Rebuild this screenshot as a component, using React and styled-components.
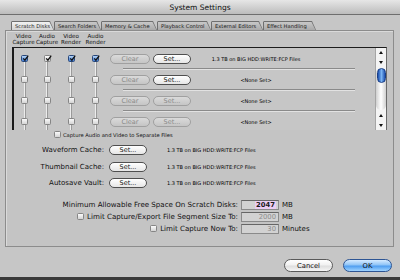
import React from "react"
import styled, {createGlobalStyle} from "styled-components"

const GlobalStyle = createGlobalStyle`
  html, body {
    margin: 0;
    padding: 0;
    background: #c4c4c4;
  }
  body {
    font-family: "DejaVu Sans", "Liberation Sans", sans-serif;
    color: #111;
  }
`

const tabs = [
  {label: "Scratch Disks", width: 43, active: true},
  {label: "Search Folders", width: 47},
  {label: "Memory & Cache", width: 56},
  {label: "Playback Control", width: 54},
  {label: "External Editors", width: 52},
  {label: "Effect Handling", width: 53},
]

const rows = [
  {checks: ["blue", "plain", "blue", "blue"], setOn: true, path: "1.3 TB on  BIG HDD:WRITE:FCP Files"},
  {checks: [null, null, null, null], setOn: true, path: "<None Set>"},
  {checks: [null, null, null, null], setOn: false, path: "<None Set>"},
  {checks: [null, null, null, null], setOn: false, path: "<None Set>"},
]

const caches = ["Waveform Cache:", "Thumbnail Cache:", "Autosave Vault:"]

function Check({tone}) {
  return (
    <Box $tone={tone}>
      {tone && (
        <svg width="7" height="7" viewBox="0 0 7 7">
          <path d="M1.2 3.4 L2.9 5.2 L6.2 0.6" fill="none" stroke="#111" strokeWidth="1.3" />
        </svg>
      )}
    </Box>
  )
}

export default function App () {
  return (
    <Window>
      <GlobalStyle />
      <TitleBar>System Settings</TitleBar>
      <Content>
        <TabBar>
          {tabs.map((t) => (
            <TabEdge key={t.label} $width={t.width}>
              <TabFace $active={t.active}>{t.label}</TabFace>
            </TabEdge>
          ))}
        </TabBar>

        <Panel>
          <HeaderRow>
            <span>Video<br />Capture</span>
            <span>Audio<br />Capture</span>
            <span>Video<br />Render</span>
            <span>Audio<br />Render</span>
          </HeaderRow>

          <ListBox>
            <Rows>
              {rows.map((r, i) => (
                <Row key={i}>
                  <Checks>
                    {r.checks.map((c, j) => (
                      <CheckCell key={j} $first={i === 0}>
                        <Check tone={c} />
                      </CheckCell>
                    ))}
                  </Checks>
                  <PillButton $width={40} $on={false} $gap={2}>Clear</PillButton>
                  <PillButton $width={38} $on={r.setOn} $gap={3}>Set...</PillButton>
                  <PathText>{r.path}</PathText>
                </Row>
              ))}
            </Rows>
            <ScrollBar>
              <Arrow><Tri $up /></Arrow>
              <Arrow><Tri /></Arrow>
              <Track><Thumb /></Track>
              <Arrow><Tri $up /></Arrow>
              <Arrow><Tri /></Arrow>
            </ScrollBar>
          </ListBox>

          <SeparateRow>
            <Check />
            <span>Capture Audio and Video to Separate Files</span>
          </SeparateRow>

          <CacheGrid>
            {caches.map((c) => (
              <React.Fragment key={c}>
                <CacheLabel>{c}</CacheLabel>
                <PillButton $width={38} $on={true} $gap={0}>Set...</PillButton>
                <CachePath>1.3 TB on  BIG HDD:WRITE:FCP Files</CachePath>
              </React.Fragment>
            ))}
          </CacheGrid>

          <LimitsGrid>
            <LimitLabel>Minimum Allowable Free Space On Scratch Disks:</LimitLabel>
            <Field $active><Highlight>2047</Highlight></Field>
            <Unit>MB</Unit>

            <LimitLabel><Check /><span>Limit Capture/Export File Segment Size To:</span></LimitLabel>
            <Field>2000</Field>
            <Unit>MB</Unit>

            <LimitLabel><Check /><span>Limit Capture Now To:</span></LimitLabel>
            <Field>30</Field>
            <Unit>Minutes</Unit>
          </LimitsGrid>
        </Panel>

        <Footer>
          <DialogButton>Cancel</DialogButton>
          <DialogButton $primary>OK</DialogButton>
        </Footer>
      </Content>
      <BottomStrip />
    </Window>
  )
}

const Window = styled.div`
  width: 400px;
  height: 280px;
  display: flex;
  flex-direction: column;
  background: #c6c6c6;
  overflow: hidden;
`

const TitleBar = styled.div`
  height: 14px;
  border-bottom: 1px solid #6e6e6e;
  background: linear-gradient(#e6e6e6, #bcbcbc);
  display: flex;
  align-items: center;
  justify-content: center;
  font-size: 7.5px;
  color: #111;
`

const Content = styled.div`
  flex: 1;
  display: flex;
  flex-direction: column;
  padding: 6px 6px 0 5px;
`

const TabBar = styled.div`
  height: 9px;
  display: flex;
  padding-left: 6px;
`

const TabEdge = styled.div`
  width: ${p => p.$width}px;
  height: 9px;
  padding: 1px 0 0 1px;
  box-sizing: border-box;
  background: #6f6f6f;
  clip-path: polygon(0 100%, 0 1px, 1px 0, calc(100% - 4px) 0, 100% 100%);
`

const TabFace = styled.div`
  height: 100%;
  padding-left: 3px;
  display: flex;
  align-items: center;
  font-size: 5.2px;
  color: #1a1a1a;
  background: ${p => p.$active ? "linear-gradient(#f2f2f2, #d2d2d2)" : "linear-gradient(#c8c8c8, #a9a9a9)"};
  clip-path: polygon(0 100%, 0 0, calc(100% - 4.5px) 0, calc(100% - 0.5px) 100%);
`

const Panel = styled.div`
  height: 217px;
  box-sizing: border-box;
  border: 1px solid #8c8c8c;
  box-shadow: inset 1px 1px 0 #dadada;
  background: #c4c4c4;
  padding: 0 6px 0 6px;
  display: flex;
  flex-direction: column;
`

const HeaderRow = styled.div`
  height: 16px;
  display: grid;
  grid-template-columns: 23px 24px 24px 25px;
  align-items: center;
  span {
    text-align: center;
    font-size: 5.6px;
    line-height: 6.5px;
    color: #111;
  }
`

const ListBox = styled.div`
  height: 83px;
  box-sizing: border-box;
  display: flex;
  border-top: 1px solid #1c1c1c;
  border-left: 2px solid #1c1c1c;
  border-right: 1px solid #6a6a6a;
  background: #c6c6c6;
  overflow: hidden;
`

const Rows = styled.div`
  flex: 1;
  display: flex;
  flex-direction: column;
`

const Row = styled.div`
  position: relative;
  height: 21px;
  flex: none;
  display: flex;
  align-items: center;

  &::after {
    content: "";
    position: absolute;
    left: 109px;
    width: 232px;
    bottom: 0;
    height: 1px;
    background: #8a8a8a;
    box-shadow: 0 1px 0 #e2e2e2;
  }
`

const Checks = styled.div`
  height: 100%;
  display: grid;
  grid-template-columns: 21px 24px 24px 25px;
`

const CheckCell = styled.div`
  position: relative;
  display: flex;
  align-items: center;
  justify-content: center;
  height: 100%;

  &::before {
    content: "";
    position: absolute;
    left: calc(50% - 1px);
    top: ${p => p.$first ? "50%" : "0"};
    bottom: 0;
    width: 1px;
    background: #ececec;
    box-shadow: 1px 0 0 #9a9a9a;
  }
`

const Box = styled.div`
  position: relative;
  width: 7px;
  height: 7px;
  flex: none;
  box-sizing: border-box;
  border-radius: 1.5px;
  display: flex;
  align-items: center;
  justify-content: center;
  border: 1px solid ${p => p.$tone === "blue" ? "#27477c" : "#858585"};
  background: ${p => p.$tone === "blue" ? "linear-gradient(#b7d6f8, #3d78cf)" : "linear-gradient(#fafafa, #d4d4d4)"};
  svg {
    position: absolute;
    left: 0;
    top: -1px;
  }
`

const PillButton = styled.div`
  width: ${p => p.$width}px;
  height: 10px;
  margin-left: ${p => p.$gap}px;
  box-sizing: border-box;
  border-radius: 5px;
  display: flex;
  align-items: center;
  justify-content: center;
  font-size: 6.5px;
  border: 1px solid ${p => p.$on ? "#4f4f4f" : "#a0a0a0"};
  color: ${p => p.$on ? "#111" : "#8a8a8a"};
  background: ${p => p.$on ? "linear-gradient(#ffffff, #e6e6e6)" : "linear-gradient(#dadada, #c5c5c5)"};
`

const PathText = styled.div`
  width: 112px;
  margin-left: 9px;
  text-align: center;
  font-size: 5px;
  color: #000;
  white-space: nowrap;
`

const ScrollBar = styled.div`
  width: 10px;
  flex: none;
  display: flex;
  flex-direction: column;
  background: #f4f4f4;
  border-left: 1px solid #a5a5a5;
`

const Arrow = styled.div`
  height: 9.5px;
  flex: none;
  display: flex;
  align-items: center;
  justify-content: center;
`

const Tri = styled.div`
  width: 0;
  height: 0;
  border-left: 2.5px solid transparent;
  border-right: 2.5px solid transparent;
  ${p => p.$up ? "border-bottom: 3px solid #111;" : "border-top: 3px solid #111;"}
`

const Track = styled.div`
  flex: 1;
  margin: 1px 0;
  border-radius: 5px;
  background: linear-gradient(90deg, #d0d0d0, #ffffff 50%, #d0d0d0);
`

const Thumb = styled.div`
  width: 9px;
  height: 15px;
  margin: 0 auto;
  border-radius: 4.5px;
  background: linear-gradient(90deg, #1c4fae, #79b3f3 50%, #1c4fae);
  border: 1px solid #193e86;
  box-sizing: border-box;
`

const SeparateRow = styled.div`
  height: 9px;
  display: flex;
  align-items: center;
  gap: 2px;
  padding-left: 42px;
  span {
    font-size: 5.2px;
    color: #111;
  }
`

const CacheGrid = styled.div`
  margin-top: 3px;
  display: grid;
  grid-template-columns: 92px 38px 1fr;
  grid-auto-rows: 16.5px;
  column-gap: 5px;
  align-items: center;
`

const CacheLabel = styled.div`
  text-align: right;
  font-size: 7px;
  color: #111;
`

const CachePath = styled.div`
  margin-left: 15px;
  font-size: 5px;
  color: #000;
  white-space: nowrap;
`

const LimitsGrid = styled.div`
  margin-top: 7px;
  display: grid;
  grid-template-columns: 226px 38px 1fr;
  grid-auto-rows: 12px;
  column-gap: 3px;
  align-items: center;
`

const LimitLabel = styled.div`
  display: flex;
  justify-content: flex-end;
  align-items: center;
  gap: 3px;
  font-size: 7.1px;
  color: #111;
  white-space: nowrap;
`

const Field = styled.div`
  height: 10px;
  box-sizing: border-box;
  border: 1px solid #8a8a8a;
  border-top-color: #666;
  background: #d2d2d2;
  display: flex;
  align-items: center;
  justify-content: flex-end;
  padding-right: 2px;
  font-size: 6.8px;
  color: ${p => p.$active ? "#1a1a1a" : "#8c8c8c"};
  font-weight: ${p => p.$active ? "bold" : "normal"};
`

const Highlight = styled.span`
  background: #ebcdf3;
  padding: 0 1px;
`

const Unit = styled.div`
  font-size: 7px;
  color: #111;
`

const Footer = styled.div`
  flex: 1;
  display: flex;
  justify-content: flex-end;
  align-items: flex-start;
  padding-top: 12px;
  padding-right: 2px;
  gap: 10px;
`

const DialogButton = styled.div`
  width: 49px;
  height: 13px;
  box-sizing: border-box;
  border-radius: 7px;
  display: flex;
  align-items: center;
  justify-content: center;
  font-size: 6.8px;
  color: #111;
  border: 1px solid ${p => p.$primary ? "#2d5594" : "#5a5a5a"};
  background: ${p => p.$primary
    ? "linear-gradient(#d6ebff, #8fc4f7 45%, #4f9ef0 55%, #9fd3ff)"
    : "linear-gradient(#ffffff, #f1f1f1 45%, #dedede 55%, #f6f6f6)"};
`

const BottomStrip = styled.div`
  height: 3px;
  flex: none;
  background: #3a3a3a;
`
